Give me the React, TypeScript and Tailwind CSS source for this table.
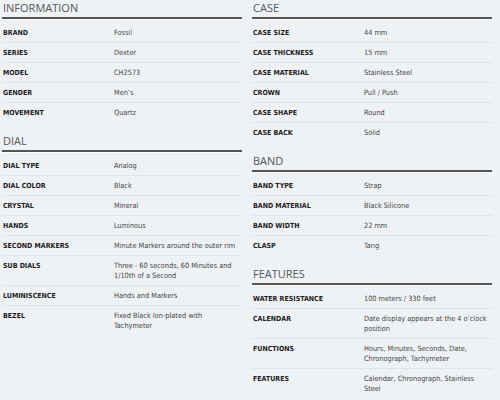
import React from "react";

type Row = [string, string];
type Section = { title: string; rows: Row[] };

const left: Section[] = [
  {
    title: "INFORMATION",
    rows: [
      ["BRAND", "Fossil"],
      ["SERIES", "Dexter"],
      ["MODEL", "CH2573"],
      ["GENDER", "Men’s"],
      ["MOVEMENT", "Quartz"],
    ],
  },
  {
    title: "DIAL",
    rows: [
      ["DIAL TYPE", "Analog"],
      ["DIAL COLOR", "Black"],
      ["CRYSTAL", "Mineral"],
      ["HANDS", "Luminous"],
      ["SECOND MARKERS", "Minute Markers around the outer rim"],
      ["SUB DIALS", "Three - 60 seconds, 60 Minutes and 1/10th of a Second"],
      ["LUMINISCENCE", "Hands and Markers"],
      ["BEZEL", "Fixed Black Ion-plated with Tachymeter"],
    ],
  },
];

const right: Section[] = [
  {
    title: "CASE",
    rows: [
      ["CASE SIZE", "44 mm"],
      ["CASE THICKNESS", "15 mm"],
      ["CASE MATERIAL", "Stainless Steel"],
      ["CROWN", "Pull / Push"],
      ["CASE SHAPE", "Round"],
      ["CASE BACK", "Solid"],
    ],
  },
  {
    title: "BAND",
    rows: [
      ["BAND TYPE", "Strap"],
      ["BAND MATERIAL", "Black Silicone"],
      ["BAND WIDTH", "22 mm"],
      ["CLASP", "Tang"],
    ],
  },
  {
    title: "FEATURES",
    rows: [
      ["WATER RESISTANCE", "100 meters / 330 feet"],
      ["CALENDAR", "Date display appears at the 4 o’clock position"],
      ["FUNCTIONS", "Hours, Minutes, Seconds, Date, Chronograph, Tachymeter"],
      ["FEATURES", "Calendar, Chronograph, Stainless Steel"],
    ],
  },
];

function SpecSection({ section }: { section: Section }) {
  return (
    <div className="mb-[11px]">
      {/* Heading with dark rule */}
      <h2 className="font-['Open_Sans',sans-serif] text-[11px] leading-[15px] pl-px pb-[2px] text-[#555] border-b-2 border-[#555] shadow-[0_1px_0_#fff] mb-[4px]">
        {section.title}
      </h2>
      {section.rows.map(([label, value], i) => (
        <div
          key={label}
          className={
            "flex pt-[5px] pb-[4px] " +
            (i < section.rows.length - 1 ? "border-b border-[#e0e4e8]" : "")
          }
        >
          <div className="w-[112px] shrink-0 pl-px font-['DejaVu_Sans_Condensed','DejaVu_Sans',sans-serif] font-bold text-[7px] leading-[10px] text-[#1c1c1c]">
            {label}
          </div>
          <div className="flex-1 font-['DejaVu_Sans_Condensed','DejaVu_Sans',sans-serif] text-[7.3px] leading-[10px] text-[#444]">
            {value}
          </div>
        </div>
      ))}
    </div>
  );
}

export default function App() {
  return (
    <div className="w-[500px] h-[400px] overflow-hidden bg-[#eff2f5] pl-[2px]">
      <div className="grid grid-cols-[240px_240px] gap-x-[10px] items-start">
        <div>
          {left.map((s) => (
            <SpecSection key={s.title} section={s} />
          ))}
        </div>
        <div>
          {right.map((s) => (
            <SpecSection key={s.title} section={s} />
          ))}
        </div>
      </div>
    </div>
  );
}
